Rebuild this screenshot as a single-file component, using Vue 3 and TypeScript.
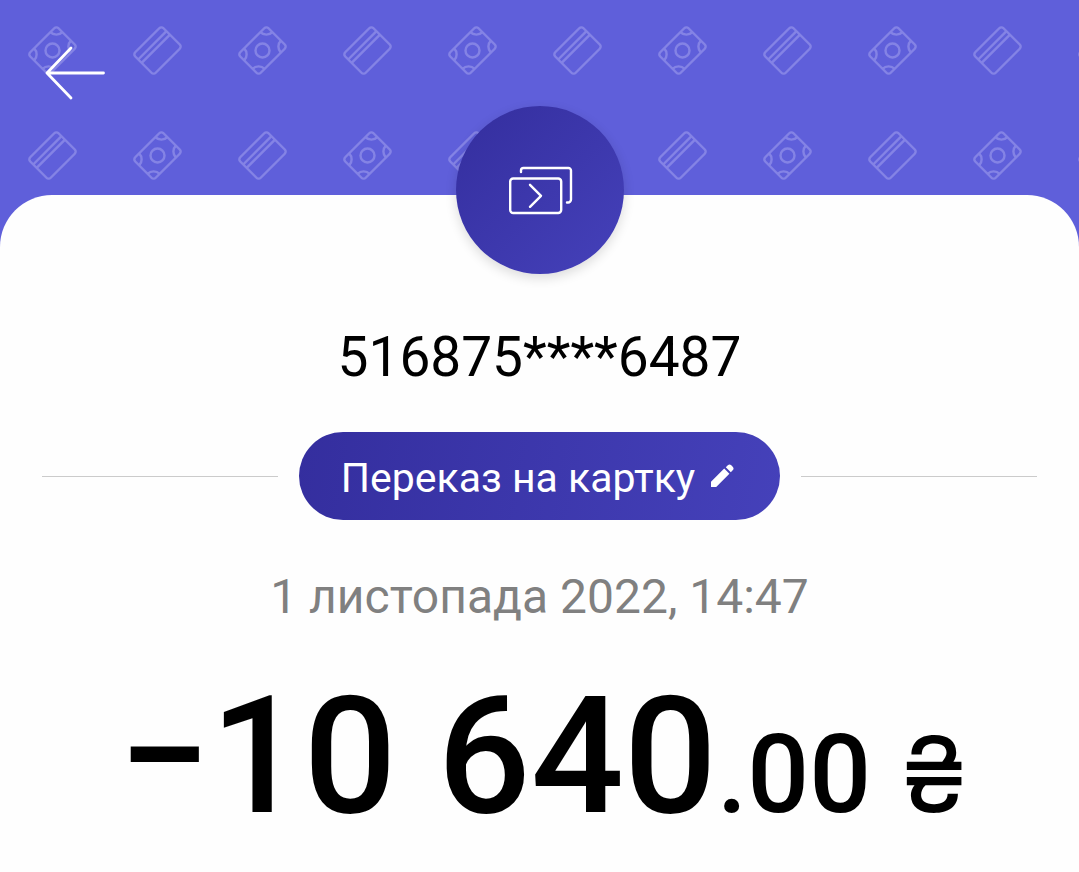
<script setup lang="ts">
const cardNumber = '516875****6487'
const category = 'Переказ на картку'
const date = '1 листопада 2022, 14:47'
const amount = { whole: '−10 640', cents: '.00', currency: '₴' }
const notes = [{ x: 52, y: 50 }, { x: 157, y: 155 }]
const cards = [{ x: 157, y: 50 }, { x: 52, y: 155 }]
</script>

<template>
  <main class="page">
    <header class="hero">
      <svg class="pattern" aria-hidden="true">
        <defs>
          <pattern id="money" width="210" height="210" patternUnits="userSpaceOnUse">
            <g fill="none" stroke="#8483e5" stroke-width="2.4">
              <g v-for="(n, i) in notes" :key="'n' + i" :transform="`translate(${n.x + 0.5} ${n.y + 0.5}) rotate(-45)`">
                <rect x="-20" y="-14.5" width="40" height="29" rx="3" />
                <circle r="7" />
                <path d="M-11.500-14.500a8.500 8.500 0 0 1-8.500 8.500M11.500-14.500a8.500 8.500 0 0 0 8.500 8.500M-20 6a8.500 8.500 0 0 1 8.500 8.500M20 6a8.500 8.500 0 0 0-8.500 8.500" />
              </g>
              <g v-for="(c, i) in cards" :key="'c' + i" :transform="`translate(${c.x + 0.5} ${c.y + 0.5}) rotate(-45)`">
                <rect x="-20" y="-14.5" width="40" height="29" rx="3" />
                <path d="M-20-7.300h40M-20-2.400h40" />
              </g>
            </g>
          </pattern>
        </defs>
        <rect width="100%" height="100%" fill="url(#money)" />
      </svg>
      <button class="back" type="button" aria-label="Назад">
        <svg width="60" height="54" viewBox="0 0 60 54" fill="none" stroke="#fff" stroke-width="2.8" stroke-linecap="round" stroke-linejoin="round">
          <path d="M58.500 27H2M26 2 2 27l24 25" />
        </svg>
      </button>
    </header>

    <section class="sheet">
      <div class="avatar">
        <svg width="66" height="50" viewBox="-2 -2 66 50" fill="none" stroke="#fff" stroke-width="2.4" stroke-linecap="round" stroke-linejoin="round">
          <rect x="1.200" y="11.500" width="51" height="34.500" rx="3" />
          <path d="M12 5V3.500a2.500 2.500 0 0 1 2.500-2.500H59.500A2.500 2.500 0 0 1 62 3.500V32.500a3 3 0 0 1-3 3H58M21 17.800 32 28.800 21 39.800" />
        </svg>
      </div>
      <h1 class="number">{{ cardNumber }}</h1>
      <div class="category">
        <button class="pill" type="button">
          <span class="label">{{ category }}</span>
          <svg width="24" height="24" viewBox="0 0 24 24" fill="#fff" aria-hidden="true">
            <path d="M0 23v-5.200L13.200 4.600l5.200 5.200L5.200 23zM14.800 3.200 16.800 1.300a2.500 2.500 0 0 1 3.500 0l1.400 1.400a2.500 2.500 0 0 1 0 3.500L19.800 8.200z" />
          </svg>
        </button>
      </div>
      <p class="date">{{ date }}</p>
      <p class="amount">
        <span class="whole">{{ amount.whole }}</span><span class="cents">{{ amount.cents }}</span><span class="currency">{{ amount.currency }}</span>
      </p>
    </section>
  </main>
</template>

<style>
body {
  background: #fefefe;
}
</style>

<style scoped>
.page {
  font-family: Roboto, "Liberation Sans", sans-serif;
  color: #000;
}
.hero {
  position: relative;
  height: 248px;
  background: #5f5fda;
}
.pattern {
  position: absolute;
  inset: 0;
  width: 100%;
  height: 100%;
}
.back {
  position: relative;
  margin: 46px 0 0 45px;
  padding: 0;
  border: 0;
  background: none;
  cursor: pointer;
}
.back svg,
.avatar svg,
.pill svg {
  display: block;
}
.sheet {
  position: relative;
  display: flex;
  flex-direction: column;
  align-items: center;
  margin-top: -53px;
  background: #fefefe;
  border-radius: 52px 52px 0 0;
}
.avatar {
  display: flex;
  align-items: center;
  justify-content: center;
  width: 168px;
  height: 168px;
  margin-top: -89px;
  border-radius: 50%;
  background: linear-gradient(135deg, #342e9e, #4541ba);
  box-shadow: 0 4px 12px rgba(0, 0, 0, 0.14);
}
.number {
  margin: 51px 0 0;
  font-size: 55px;
  line-height: 64px;
  font-weight: 400;
}
.category {
  display: flex;
  align-items: center;
  align-self: stretch;
  gap: 21px;
  margin-top: 43px;
  padding: 0 42px;
}
.category::before,
.category::after {
  content: "";
  flex: 1;
  height: 1px;
  background: #cbcbcb;
}
.pill {
  display: flex;
  align-items: center;
  gap: 16px;
  height: 88px;
  padding: 0 45px 0 42px;
  border: 0;
  border-radius: 44px;
  background: linear-gradient(100deg, #342e9e, #4541ba);
  color: #fff;
  font: 400 41px/48px Roboto, "Liberation Sans", sans-serif;
  cursor: pointer;
}
.label {
  padding-top: 4px;
}
.date {
  margin: 49px 0 0;
  font-size: 48px;
  line-height: 56px;
  color: #808080;
}
.amount {
  display: flex;
  align-items: baseline;
  margin: 35px 0 0;
  line-height: 192px;
  font-weight: 500;
  white-space: nowrap;
}
.whole {
  font-size: 164px;
}
.cents {
  font-size: 109px;
}
.currency {
  margin: 0 -6px 0 30px;
  font-family: Inter, Roboto, sans-serif;
  font-size: 104px;
  font-weight: 400;
}
</style>
